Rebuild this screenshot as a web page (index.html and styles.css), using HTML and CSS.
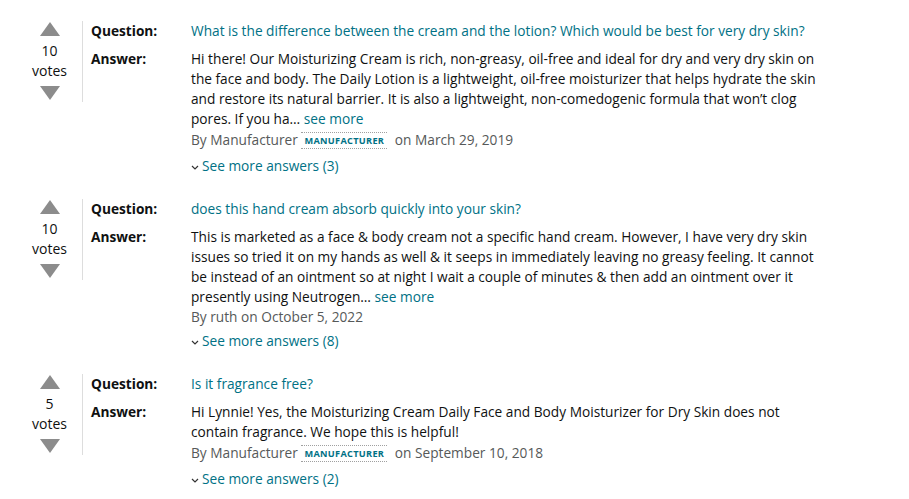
FILE: index.html
```html
<!DOCTYPE html>
<html>
<head>
<meta charset="utf-8">
<link rel="stylesheet" href="styles.css">
</head>
<body>
<div class="qa-list">

  <div class="qa-row">
    <div class="votes">
      <svg class="arrow" width="20" height="14" viewBox="0 0 20 14"><polygon points="10,0 20,14 0,14" fill="#8c8c8c"/></svg>
      <div class="count">10</div>
      <div class="count">votes</div>
      <svg class="arrow down" width="20" height="14" viewBox="0 0 20 14"><polygon points="0,0 20,0 10,14" fill="#8c8c8c"/></svg>
    </div>
    <div class="qa-body">
      <div class="qa-q">
        <div class="label">Question:</div>
        <div class="content"><span class="link">What is the difference between the cream and the lotion? Which would be best for very dry skin?</span></div>
      </div>
      <div class="qa-a">
        <div class="label">Answer:</div>
        <div class="content">
          <div class="answer">Hi there! Our Moisturizing Cream is rich, non-greasy, oil-free and ideal for dry and very dry skin on the face and body. The Daily Lotion is a lightweight, oil-free moisturizer that helps hydrate the skin and restore its natural barrier. It is also a lightweight, non-comedogenic formula that won’t clog pores. If you ha… <span class="link">see more</span></div>
          <div class="by">By Manufacturer <span class="badge">MANUFACTURER</span> <span class="date">on March 29, 2019</span></div>
          <div class="more"><svg class="chev" width="8" height="5" viewBox="0 0 8 5"><polyline points="1,1 4,4 7,1" fill="none" stroke="#333" stroke-width="1.2"/></svg><span class="link">See more answers (3)</span></div>
        </div>
      </div>
    </div>
  </div>

  <div class="qa-row">
    <div class="votes">
      <svg class="arrow" width="20" height="14" viewBox="0 0 20 14"><polygon points="10,0 20,14 0,14" fill="#8c8c8c"/></svg>
      <div class="count">10</div>
      <div class="count">votes</div>
      <svg class="arrow down" width="20" height="14" viewBox="0 0 20 14"><polygon points="0,0 20,0 10,14" fill="#8c8c8c"/></svg>
    </div>
    <div class="qa-body">
      <div class="qa-q">
        <div class="label">Question:</div>
        <div class="content"><span class="link">does this hand cream absorb quickly into your skin?</span></div>
      </div>
      <div class="qa-a">
        <div class="label">Answer:</div>
        <div class="content">
          <div class="answer">This is marketed as a face &amp; body cream not a specific hand cream. However, I have very dry skin issues so tried it on my hands as well &amp; it seeps in immediately leaving no greasy feeling. It cannot be instead of an ointment so at night I wait a couple of minutes &amp; then add an ointment over it presently using Neutrogen… <span class="link">see more</span></div>
          <div class="by plain">By ruth on October 5, 2022</div>
          <div class="more"><svg class="chev" width="8" height="5" viewBox="0 0 8 5"><polyline points="1,1 4,4 7,1" fill="none" stroke="#333" stroke-width="1.2"/></svg><span class="link">See more answers (8)</span></div>
        </div>
      </div>
    </div>
  </div>

  <div class="qa-row">
    <div class="votes">
      <svg class="arrow" width="20" height="14" viewBox="0 0 20 14"><polygon points="10,0 20,14 0,14" fill="#8c8c8c"/></svg>
      <div class="count">5</div>
      <div class="count">votes</div>
      <svg class="arrow down" width="20" height="14" viewBox="0 0 20 14"><polygon points="0,0 20,0 10,14" fill="#8c8c8c"/></svg>
    </div>
    <div class="qa-body">
      <div class="qa-q">
        <div class="label">Question:</div>
        <div class="content"><span class="link">Is it fragrance free?</span></div>
      </div>
      <div class="qa-a">
        <div class="label">Answer:</div>
        <div class="content">
          <div class="answer">Hi Lynnie! Yes, the Moisturizing Cream Daily Face and Body Moisturizer for Dry Skin does not contain fragrance. We hope this is helpful!</div>
          <div class="by">By Manufacturer <span class="badge">MANUFACTURER</span> <span class="date">on September 10, 2018</span></div>
          <div class="more"><svg class="chev" width="8" height="5" viewBox="0 0 8 5"><polyline points="1,1 4,4 7,1" fill="none" stroke="#333" stroke-width="1.2"/></svg><span class="link">See more answers (2)</span></div>
        </div>
      </div>
    </div>
  </div>

</div>
</body>
</html>
```

FILE: styles.css
```css
* { box-sizing: border-box; }
html, body { background: #fff; }
body {
  margin: 0;
  font-family: "Open Sans", "Noto Sans", Arial, sans-serif;
  font-size: 13.7px;
  line-height: 20px;
  color: #0f1111;
}
.qa-list {
  padding: 21px 0 0 24px;
}
.qa-row {
  display: flex;
  align-items: flex-start;
  margin-bottom: 23px;
}
.votes {
  width: 59px;
  padding-right: 7px;
  border-right: 1px solid #dddddd;
  display: flex;
  flex-direction: column;
  align-items: center;
  padding-top: 1px;
  padding-bottom: 2px;
}
.arrow { display: block; }
.arrow:first-child { margin-bottom: 5px; }
.arrow.down { margin-top: 5px; }
.count { font-size: 14px; line-height: 20px; color: #0f1111; }
.qa-body { padding-left: 8px; }
.qa-q, .qa-a { display: flex; }
.qa-q { margin-bottom: 8px; }
.label {
  width: 100px;
  flex: none;
  font-weight: 700;
}
.content { width: 630px; }
.link { color: #007185; cursor: pointer; }
.by { color: #565959; line-height: 22px; padding-bottom: 1px; }
.by.plain { line-height: 20px; padding-bottom: 0; }
.badge {
  display: inline-block;
  font-size: 9.2px;
  font-weight: 700;
  letter-spacing: 0.3px;
  color: #007185;
  border-top: 1px dotted #a0a0a0;
  border-bottom: 1px dotted #a0a0a0;
  line-height: 15px;
  padding: 0 3px;
  vertical-align: 1px;
  margin-right: 4px;
}
.more { margin-top: 4px; display: flex; align-items: center; }
.chev { margin-right: 3px; margin-top: 2px; }
```
